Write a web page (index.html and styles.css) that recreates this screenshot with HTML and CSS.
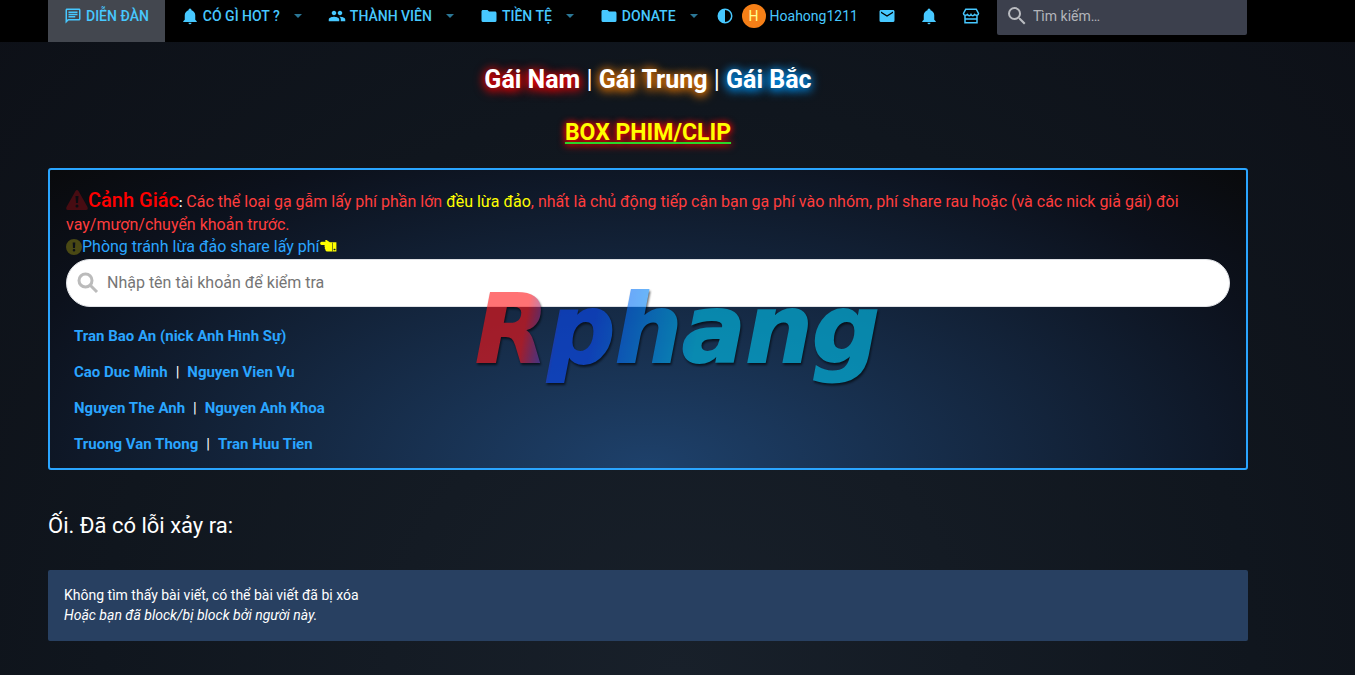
FILE: index.html
```
<!DOCTYPE html>
<html lang="vi">
  <head>
    <meta charset="UTF-8" />
    <meta name="viewport" content="width=device-width, initial-scale=1.0" />
    <title>Ối. Đã có lỗi xảy ra</title>
    <link rel="stylesheet" href="styles.css">
  </head>
  <body>
    <!-- Shared icons -->
    <svg class="sprite" aria-hidden="true">
      <symbol id="i-forum" viewBox="0 0 24 24"><path d="M20 2H4C2.9 2 2 2.9 2 4V22L6 18H20C21.1 18 22 17.1 22 16V4C22 2.9 21.1 2 20 2M20 16H5.2L4 17.2V4H20V16M6 6H18V8H6V6M6 9H18V11H6V9M6 12H15V14H6V12" /></symbol>
      <symbol id="i-bell" viewBox="0 0 24 24"><path d="M21,19V20H3V19L5,17V11C5,7.9 7.03,5.17 10,4.29C10,4.19 10,4.1 10,4A2,2 0 0,1 12,2A2,2 0 0,1 14,4C14,4.1 14,4.19 14,4.29C16.97,5.17 19,7.9 19,11V17L21,19M14,21A2,2 0 0,1 12,23A2,2 0 0,1 10,21" /></symbol>
      <symbol id="i-people" viewBox="0 0 24 24"><path d="M16 11c1.66 0 2.99-1.34 2.99-3S17.66 5 16 5c-1.66 0-3 1.34-3 3s1.34 3 3 3zm-8 0c1.66 0 2.99-1.34 2.99-3S9.66 5 8 5C6.34 5 5 6.34 5 8s1.34 3 3 3zm0 2c-2.33 0-7 1.17-7 3.5V19h14v-2.5c0-2.33-4.67-3.5-7-3.5zm8 0c-.29 0-.62.02-.97.05 1.16.84 1.97 1.97 1.97 3.45V19h6v-2.5c0-2.33-4.67-3.5-7-3.5z" /></symbol>
      <symbol id="i-folder" viewBox="0 0 24 24"><path d="M10,4H4C2.89,4 2,4.89 2,6V18A2,2 0 0,0 4,20H20A2,2 0 0,0 22,18V8C22,6.89 21.1,6 20,6H12L10,4Z" /></symbol>
      <symbol id="i-contrast" viewBox="0 0 24 24"><path fill-rule="evenodd" d="M12 2A10 10 0 1 0 12 22A10 10 0 1 0 12 2M12 4A8 8 0 0 1 12 20Z" /></symbol>
      <symbol id="i-mail" viewBox="0 0 24 24"><path d="M20,8L12,13L4,8V6L12,11L20,6M20,4H4C2.89,4 2,4.89 2,6V18A2,2 0 0,0 4,20H20A2,2 0 0,0 22,18V6C22,4.89 21.1,4 20,4Z" /></symbol>
      <symbol id="i-shop" viewBox="0 0 24 24"><path fill="none" stroke="currentColor" stroke-width="2" d="M5 3H19L22 8.500C22 11 19 12 17 10C15.500 12 13 12 12 10C11 12 8.500 12 7 10C5 12 2 11 2 8.500ZM4 11V21H20V11M4 16H20" /></symbol>
      <symbol id="i-search" viewBox="0 0 24 24"><path d="M9.500,3A6.500,6.500 0 0,1 16,9.500C16,11.110 15.410,12.590 14.440,13.730L14.710,14H15.500L20.500,19L19,20.500L14,15.500V14.710L13.730,14.440C12.590,15.410 11.110,16 9.500,16A6.500,6.500 0 0,1 3,9.500A6.500,6.500 0 0,1 9.500,3M9.500,5C7,5 5,7 5,9.500C5,12 7,14 9.500,14C12,14 14,12 14,9.500C14,7 12,5 9.500,5Z" /></symbol>
    </svg>

    <header class="topbar">
      <nav class="nav">
        <a class="nav-link active" href="#"><svg class="icon"><use href="#i-forum" /></svg>Diễn đàn</a>
        <a class="nav-link has-menu" href="#"><svg class="icon"><use href="#i-bell" /></svg>Có gì hot ?</a>
        <a class="nav-link has-menu" href="#"><svg class="icon"><use href="#i-people" /></svg>Thành viên</a>
        <a class="nav-link has-menu" href="#"><svg class="icon"><use href="#i-folder" /></svg>Tiền tệ</a>
        <a class="nav-link has-menu" href="#"><svg class="icon"><use href="#i-folder" /></svg>Donate</a>
      </nav>
      <div class="account">
        <a href="#" aria-label="Giao diện"><svg class="icon"><use href="#i-contrast" /></svg></a>
        <a class="user" href="#"><span class="avatar">H</span>Hoahong1211</a>
        <div class="account-icons">
          <a href="#" aria-label="Hộp thư"><svg class="icon"><use href="#i-mail" /></svg></a>
          <a href="#" aria-label="Thông báo"><svg class="icon"><use href="#i-bell" /></svg></a>
          <a href="#" aria-label="Cửa hàng"><svg class="icon"><use href="#i-shop" /></svg></a>
        </div>
      </div>
      <label class="site-search">
        <svg class="icon"><use href="#i-search" /></svg>
        <input type="search" placeholder="Tìm kiếm…" aria-label="Tìm kiếm" />
      </label>
    </header>

    <main class="page">
      <div class="regions">
        <a class="glow-red" href="#">Gái Nam</a> | <a class="glow-orange" href="#">Gái Trung</a> | <a class="glow-blue" href="#">Gái Bắc</a>
      </div>
      <div class="box-link"><a href="#">BOX PHIM/CLIP</a></div>

      <section class="notice">
        <p class="warning">
          <svg class="icon-warning" viewBox="0 0 22 20"><path fill-rule="evenodd" d="M9.500 1Q11 -1 12.500 1L21.500 17Q22.500 20 20 20H2Q-.5 20 .5 17ZM9.500 6L10 13H12L12.500 6ZM11 14.500A1.500 1.500 0 1 0 11 17.500A1.500 1.500 0 1 0 11 14.500" /></svg><strong>Cảnh Giác</strong><b class="colon">:</b>
          Các thể loại gạ gẫm lấy phí phần lớn <em>đều lừa đảo</em>, nhất là chủ động tiếp cận bạn gạ phí vào nhóm, phí share rau hoặc (và các nick giả gái) đòi vay/mượn/chuyển khoản trước.
        </p>
        <p class="guide">
          <svg class="icon-info" viewBox="0 0 16 16"><path fill-rule="evenodd" d="M8 0A8 8 0 1 0 8 16A8 8 0 1 0 8 0M6.700 3.500L7 9H9L9.300 3.500ZM8 10A1.300 1.300 0 1 0 8 12.600A1.300 1.300 0 1 0 8 10" /></svg><a href="#">Phòng tránh lừa đảo share lấy phí</a><svg class="icon-hand" viewBox="0 0 18 14"><path fill-rule="evenodd" d="M1.500 2H6C4.500 0 6.500 -.8 8 .8L10.500 2.500H17.500V12.500H8Q5.500 12.500 5.800 10.500Q4.500 9.500 5.200 8Q4.300 7 5 5.500H1.500Q0 5.200 0 3.800Q0 2 1.500 2ZM13 3V12H13.600V3ZM15.500 9.500A.8 .8 0 1 0 15.500 11A.8 .8 0 1 0 15.500 9.500" /></svg>
        </p>
        <label class="check-search">
          <svg viewBox="0 0 22 22"><circle cx="8.500" cy="8.500" r="6.500" /><path d="M13.500 13.500L20 20" /></svg>
          <input type="text" placeholder="Nhập tên tài khoản để kiểm tra" aria-label="Tên tài khoản" />
        </label>
        <ul class="names">
          <li><a href="#">Tran Bao An (nick Anh Hình Sự)</a></li>
          <li><a href="#">Cao Duc Minh</a><span>|</span><a href="#">Nguyen Vien Vu</a></li>
          <li><a href="#">Nguyen The Anh</a><span>|</span><a href="#">Nguyen Anh Khoa</a></li>
          <li><a href="#">Truong Van Thong</a><span>|</span><a href="#">Tran Huu Tien</a></li>
        </ul>
      </section>

      <h1>Ối. Đã có lỗi xảy ra:</h1>

      <div class="message">
        Không tìm thấy bài viết, có thể bài viết đã bị xóa<br />
        <i>Hoặc bạn đã block/bị block bởi người này.</i>
      </div>
    </main>

    <div class="watermark"><span>Rphang</span></div>
  </body>
</html>
```
FILE: styles.css
```
* {
  margin: 0;
  padding: 0;
  box-sizing: border-box;
}

body {
  font-family: Roboto, "Liberation Sans", sans-serif;
  font-size: 14px;
  line-height: 20px;
  color: #fff;
  min-height: 100vh;
  background: #10141b radial-gradient(ellipse at 50% 100%, #18202a 0%, #10161e 60%, #0d1017 100%) no-repeat;
}

a {
  color: #2aa5ff;
  text-decoration: none;
}

.sprite {
  display: none;
}

.icon {
  width: 18px;
  height: 18px;
  fill: currentColor;
  flex: none;
}

/* Top bar */
.topbar {
  display: flex;
  align-items: flex-start;
  height: 42px;
  padding: 0 108px 0 48px;
  background: #000;
}

.topbar a {
  color: #47c8ff;
}

.nav {
  display: flex;
}

.nav-link {
  display: flex;
  align-items: center;
  gap: 4px;
  height: 42px;
  padding: 0 16px 10px;
  font-weight: 500;
  text-transform: uppercase;
  white-space: nowrap;
}

.nav-link.active {
  background: #43474f;
}

.has-menu {
  padding-right: 26px;
}

.has-menu + .has-menu {
  padding-left: 0;
}

.has-menu:last-child {
  padding-right: 18px;
}

.has-menu::after {
  content: "";
  margin-left: 10px;
  border: 4px solid transparent;
  border-bottom: 0;
  border-top-color: #2b7796;
}

.account {
  display: flex;
  align-items: center;
  height: 32px;
}

.account a {
  display: flex;
  align-items: center;
}

.account .user {
  gap: 4px;
  margin-left: 8px;
}

.avatar {
  width: 24px;
  height: 24px;
  border-radius: 50%;
  background: #f57f17;
  color: #ffff8d;
  line-height: 24px;
  text-align: center;
}

.account-icons {
  display: flex;
  gap: 24px;
  margin-left: 20px;
}

.site-search {
  display: flex;
  align-items: center;
  flex: 1;
  height: 35px;
  margin-left: auto;
  max-width: 250px;
  padding: 0 8px 3px;
  border-radius: 0 0 2px 2px;
  background: #3c404d;
  color: #b9bbc0;
}

.site-search .icon {
  width: 24px;
  height: 24px;
}

.site-search input {
  flex: 1;
  min-width: 0;
  margin-left: 4px;
  border: 0;
  outline: 0;
  background: none;
  color: #fff;
  font: inherit;
}

.site-search input::placeholder {
  color: #b3b5ba;
}

/* Page */
.page {
  padding: 21px 107px 34px 48px;
}

.regions {
  font-size: 25px;
  line-height: 34px;
  text-align: center;
}

.regions a {
  color: #fff;
  font-weight: 700;
}

.glow-red {
  text-shadow: 0 2px 12px #f00, 0 1px 8px #f00;
}

.glow-orange {
  text-shadow: 0 2px 12px #ff8000, 0 1px 8px #ff8000;
}

.glow-blue {
  text-shadow: 0 2px 12px #09f, 0 1px 8px #09f;
}

.box-link {
  margin: 20px 0 19px;
  font-size: 23px;
  line-height: 32px;
  text-align: center;
}

.box-link a {
  color: #ff0;
  font-weight: 700;
  text-decoration: underline #2bd52b 2px;
  text-underline-offset: 2px;
  text-shadow: 0 1px 8px #f00, 0 0 6px #f00;
}

.notice {
  padding: 16px 16px 6px;
  border: 2px solid #2aa5ff;
  border-radius: 3px;
  background: radial-gradient(ellipse at bottom, #1e416b 0%, #0c111c 80%, #090a0c 100%);
  font-size: 16px;
  line-height: 22px;
}

.warning {
  color: #ff3d3d;
}

.warning strong {
  color: #f00;
  font-size: 20px;
  font-weight: 500;
  line-height: 28px;
}

.colon {
  color: #fff;
  font-size: 12px;
}

.warning em {
  color: #ff0;
  font-style: normal;
}

.icon-warning {
  width: 22px;
  height: 20px;
  fill: #470c12;
  vertical-align: -3px;
}

.icon-info {
  width: 16px;
  height: 16px;
  fill: #4a4914;
  vertical-align: -3px;
}

.icon-hand {
  width: 17px;
  height: 13px;
  fill: #ff0;
  vertical-align: -1px;
}

.check-search {
  display: flex;
  align-items: center;
  gap: 8px;
  height: 48px;
  margin-top: 1px;
  padding: 0 10px;
  border: 1px solid #dfe1e5;
  border-radius: 24px;
  background: #fff;
}

.check-search svg {
  width: 22px;
  height: 22px;
  fill: none;
  stroke: #bbb;
  stroke-width: 3;
}

.check-search input {
  flex: 1;
  border: 0;
  outline: 0;
  background: none;
  font: inherit;
}

.check-search input::placeholder {
  color: #757575;
}

.names {
  padding: 11px 8px 0;
  list-style: none;
  font-size: 15px;
  line-height: 36px;
}

.names a {
  font-weight: 700;
}

.names span {
  margin: 0 8px;
}

h1 {
  margin: 41px 0 29px;
  font-size: 22px;
  font-weight: 400;
  line-height: 30px;
}

.message {
  padding: 15px 16px 16px;
  border-radius: 2px;
  background: #284061;
}

/* Logo floating over the middle of the window */
.watermark {
  position: fixed;
  inset: 0;
  display: flex;
  align-items: center;
  justify-content: center;
  padding-bottom: 16px;
  opacity: 0.6;
  pointer-events: none;
  filter: drop-shadow(1px 2px 1px #000);
}

.watermark span {
  font: italic 700 94px/120px "DejaVu Sans", sans-serif;
  color: transparent;
  background: linear-gradient(100deg, #ff1418 14%, #0a4bf8 22%, #0a4bf8 30%, #00c7f2 55%);
  background-clip: text;
  -webkit-background-clip: text;
  -webkit-text-stroke: 2px transparent;
}
```
